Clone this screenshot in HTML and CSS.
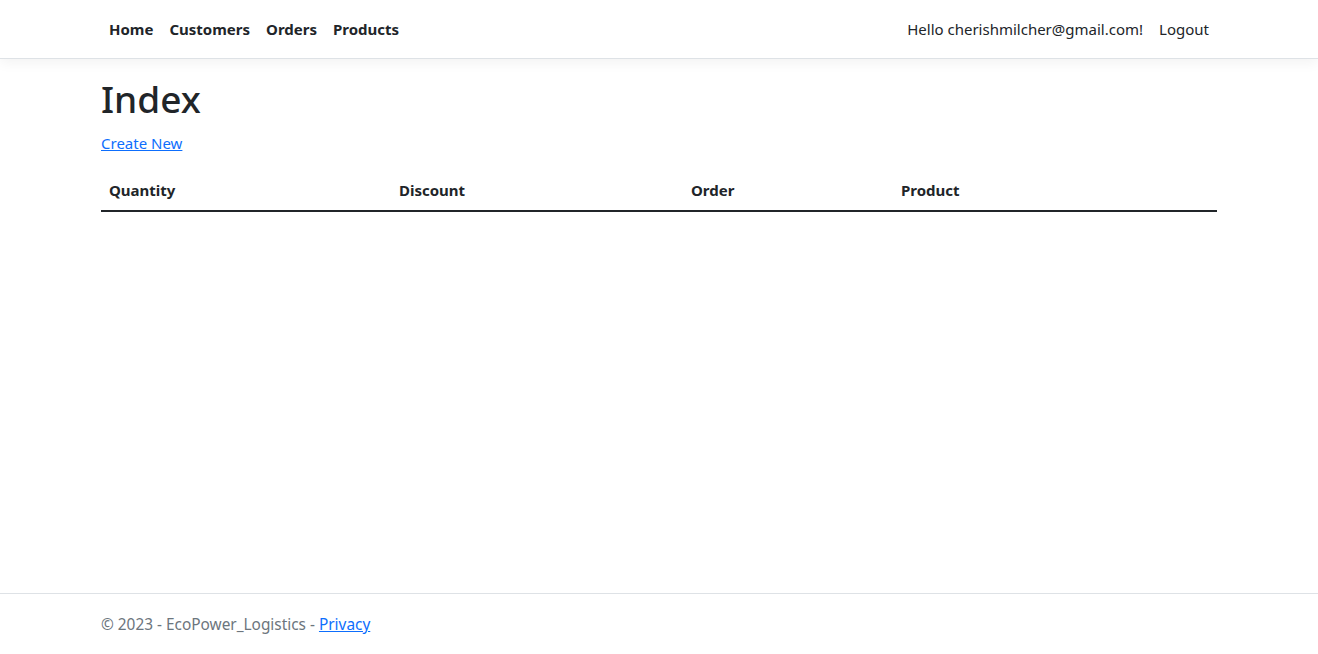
FILE: index.html
```html
<!DOCTYPE html>
<html lang="en">
<head>
<meta charset="utf-8">
<title>Index - EcoPower_Logistics</title>
<link rel="stylesheet" href="styles.css">
</head>
<body>
<header class="topbar">
  <nav class="container navrow">
    <ul class="navlist">
      <li><a class="navlink bold" href="#">Home</a></li>
      <li><a class="navlink bold" href="#">Customers</a></li>
      <li><a class="navlink bold" href="#">Orders</a></li>
      <li><a class="navlink bold" href="#">Products</a></li>
    </ul>
    <ul class="navlist">
      <li><a class="navlink" href="#">Hello cherishmilcher@gmail.com!</a></li>
      <li><button class="navlink btnlink" type="button">Logout</button></li>
    </ul>
  </nav>
</header>
<main class="container main">
  <h1 class="title">Index</h1>
  <p class="para"><a class="link" href="#">Create New</a></p>
  <table class="table">
    <thead>
      <tr>
        <th class="c1">Quantity</th>
        <th class="c2">Discount</th>
        <th class="c3">Order</th>
        <th class="c4">Product</th>
        <th class="c5"></th>
      </tr>
    </thead>
    <tbody></tbody>
  </table>
</main>
<footer class="footer">
  <div class="container footer-text">&copy; 2023 - EcoPower_Logistics - <a class="link" href="#">Privacy</a></div>
</footer>
</body>
</html>
```
FILE: styles.css
```css
* { box-sizing: border-box; }
html, body { margin: 0; padding: 0; }
body {
  font-family: "Noto Sans", "Open Sans", sans-serif;
  font-size: 15px;
  line-height: 24px;
  color: #212529;
  background: #fff;
  min-height: 100vh;
  display: flex;
  flex-direction: column;
}
.container {
  width: 1140px;
  margin: 0 auto;
  padding: 0 12px;
}
.topbar {
  background: #fff;
  border-bottom: 1px solid #dee2e6;
  box-shadow: 0 4px 12px rgba(0,0,0,0.05);
  padding: 9px 0;
  margin-bottom: 16px;
}
.navrow {
  display: flex;
  justify-content: space-between;
  align-items: center;
}
.navlist {
  list-style: none;
  margin: 0;
  padding: 0;
  display: flex;
}
.navlink {
  display: block;
  padding: 8px;
  color: #212529;
  text-decoration: none;
  font: inherit;
}
.bold { font-weight: 700; }
.btnlink {
  background: none;
  border: 0;
  cursor: pointer;
  line-height: 24px;
}
.main { flex: 1; }
.title {
  margin: 0 0 8px;
  font-size: 37px;
  line-height: 48px;
  font-weight: 500;
}
.para { margin: 0 0 15px; }
.link { color: #0d6efd; text-decoration: underline; }
.table {
  width: 100%;
  border-collapse: collapse;
}
.table th {
  text-align: left;
  padding: 8px;
  font-weight: 700;
  border-bottom: 2px solid #212529;
}
.c1 { width: 290px; }
.c2 { width: 292px; }
.c3 { width: 210px; }
.c4 { width: 200px; }
.footer {
  border-top: 1px solid #dee2e6;
  line-height: 60px;
  color: #6c757d;
  white-space: nowrap;
}
.footer-text { font-size: 15.4px; padding-top: 1px; line-height: 59px; }
```
